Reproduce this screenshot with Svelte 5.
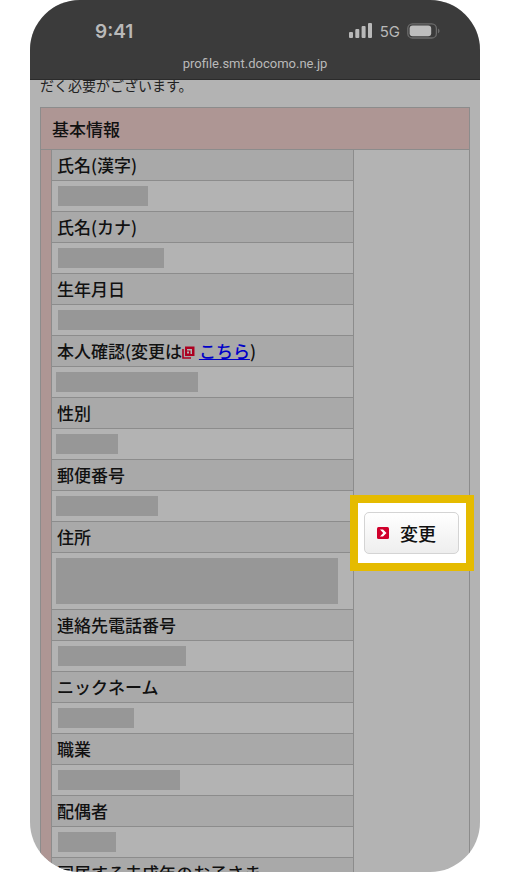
<script>
  let fields = [
    { label: '氏名(漢字)', width: 90 },
    { label: '氏名(カナ)', width: 106 },
    { label: '生年月日', width: 142 },
    { label: '本人確認', width: 142, link: true, wide: true },
    { label: '性別', width: 62, wide: true },
    { label: '郵便番号', width: 102, wide: true },
    { label: '住所', width: 282, wide: true, tall: true },
    { label: '連絡先電話番号', width: 128 },
    { label: 'ニックネーム', width: 76 },
    { label: '職業', width: 122 },
    { label: '配偶者', width: 58 },
    { label: '同居する未成年のお子さま', width: 58 }
  ];
</script>

<div class="phone">
  <header>
    <div class="status">
      <span class="time">9:41</span>
      <span class="network">
        <svg width="24" height="16" viewBox="0 0 24 16" fill="#b9b9b9">
          <rect x="0" y="9" width="4" height="6" rx="1" />
          <rect x="6.300" y="6" width="4" height="9" rx="1" />
          <rect x="12.600" y="3" width="4" height="12" rx="1" />
          <rect x="19" y="0" width="4" height="15" rx="1" />
        </svg>
        <span>5G</span>
        <svg width="34" height="16" viewBox="0 0 34 16">
          <rect x="0.8" y="0.8" width="28.6" height="14.2" rx="4.6" fill="none" stroke="#6c6c6c" stroke-width="1.3" />
          <rect x="2.6" y="2.6" width="21.6" height="10.6" rx="3" fill="#bdbdbd" />
          <path d="M31 5.5c2 .8 2 4 0 4.8z" fill="#6c6c6c" />
        </svg>
      </span>
    </div>
    <div class="url">profile.smt.docomo.ne.jp</div>
  </header>

  <main>
    <p>だく必要がございます。</p>
    <table>
      <thead>
        <tr><th class="title" colspan="3">基本情報</th></tr>
      </thead>
      <tbody>
        {#each fields as field, i}
          <tr>
            {#if i == 0}
              <td class="strip" rowspan={fields.length * 2}></td>
            {/if}
            <th class="label">
              {#if field.link}
                {field.label}(変更は<svg class="window" width="13" height="13" viewBox="0 0 13 13">
                  <path d="M1 3v9h8" fill="none" stroke="#ad0020" stroke-width="1.6" />
                  <path d="M3 0.500h9.500v9.500H3z" fill="#ad0020" />
                  <path d="M5 3h5v5H8.500V4.500H5z" fill="#b3b3b3" />
                  <path d="M5 5.500h2v2H5z" fill="#b3b3b3" />
                </svg>
                <a href="#identity">こちら</a>)
              {:else}
                {field.label}
              {/if}
            </th>
            {#if i == 0}
              <td class="action" rowspan={fields.length * 2}>
                <div class="highlight">
                  <button type="button">
                    <svg width="12" height="12" viewBox="0 0 12 12">
                      <rect width="12" height="12" rx="1.500" fill="#d0002c" />
                      <path d="M3 2.500h3L9.500 6 6 9.500H3L6.200 6z" fill="#fff" />
                    </svg>
                    変更
                  </button>
                </div>
              </td>
            {/if}
          </tr>
          <tr>
            <td class="value" class:wide={field.wide}>
              <div class="mask" class:tall={field.tall} style="width: {field.width}px"></div>
            </td>
          </tr>
        {/each}
      </tbody>
    </table>
  </main>
</div>

<style>
  :global(body) {
    background: #fff;
  }
  .phone {
    height: 100vh;
    margin: 0 30px;
    overflow: hidden;
    border-radius: 50px;
    background: #b3b3b3;
    color: #111;
    font-family: "Noto Sans CJK JP", sans-serif;
  }
  header {
    box-sizing: border-box;
    height: 80px;
    padding-top: 20px;
    border-bottom: 1px solid #2b2b2b;
    background: #3b3b3b;
    color: #b9b9b9;
    font-family: Inter, sans-serif;
  }
  .status {
    display: flex;
    justify-content: space-between;
    align-items: center;
    height: 22px;
    padding: 0 39px 0 65px;
  }
  .time {
    font-size: 19px;
    font-weight: 600;
  }
  .network {
    display: flex;
    align-items: center;
    gap: 7px;
    font-size: 15px;
  }
  .url {
    margin-top: 12px;
    font-family: Roboto, sans-serif;
    font-size: 13px;
    line-height: 20px;
    text-align: center;
  }
  main {
    padding: 0 10px;
  }
  p {
    margin: 0;
    padding-bottom: 16px;
    color: #222;
    font-size: 14px;
    line-height: 11px;
  }
  table {
    width: 100%;
    border: 1px solid #8c8c8c;
    border-collapse: collapse;
    font-size: 17px;
  }
  th, td {
    padding: 0;
    border: 1px solid #8c8c8c;
    font-weight: 500;
    text-align: left;
  }
  .title {
    padding: 0 11px;
    background: #ae9694;
    line-height: 41px;
  }
  .strip {
    width: 10px;
    background: #ae9694;
  }
  .label {
    height: 30px;
    padding: 0 5px;
    background: #a9a9a9;
    line-height: 30px;
    white-space: nowrap;
  }
  .value {
    padding: 5px 6px;
  }
  .value.wide {
    padding-left: 4px;
  }
  .mask {
    height: 20px;
    background: #979797;
  }
  .mask.tall {
    height: 46px;
  }
  .window {
    vertical-align: -1px;
  }
  a {
    color: #0000c8;
  }
  .action {
    width: 115px;
    padding-bottom: 3px;
    vertical-align: middle;
  }
  .highlight {
    position: relative;
    box-sizing: border-box;
    width: 124px;
    margin: 0 -5px 0 -4px;
    padding: 9px 7px 9px 6px;
    border: 8px solid #e5bb00;
    background: #fff;
  }
  button {
    display: flex;
    align-items: center;
    gap: 11px;
    box-sizing: border-box;
    width: 95px;
    height: 42px;
    padding: 0 12px;
    border: 1px solid #d4d4d4;
    border-radius: 5px;
    background: linear-gradient(#fff, #eee);
    color: #111;
    font: 500 18px/20px "Noto Sans CJK JP", sans-serif;
  }
</style>
